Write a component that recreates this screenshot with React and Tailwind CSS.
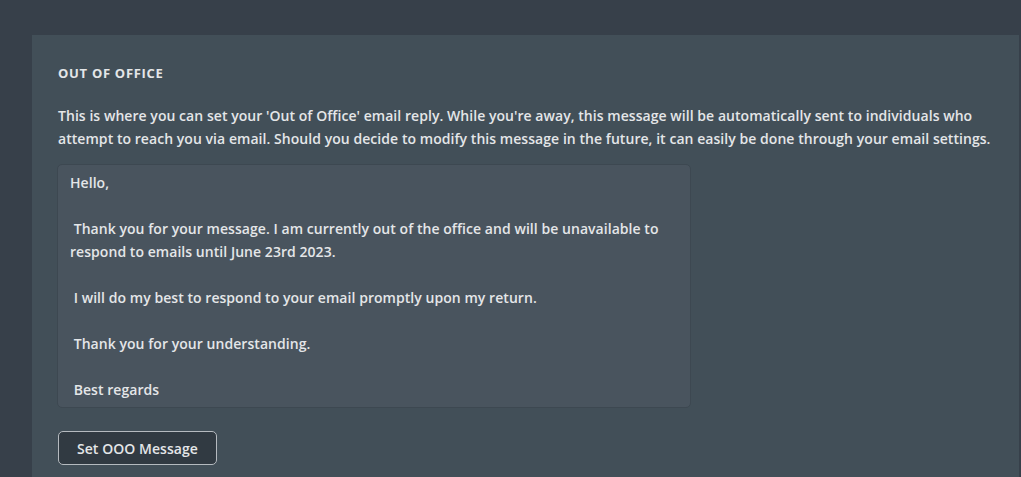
import React from 'react';

const MESSAGE = `Hello,

 Thank you for your message. I am currently out of the office and will be unavailable to respond to emails until June 23rd 2023.

 I will do my best to respond to your email promptly upon my return.

 Thank you for your understanding.

 Best regards`;

export default function App() {
  const [message, setMessage] = React.useState(MESSAGE);

  return (
    <div className="min-h-[477px] w-full bg-[#37404a] pt-[35px] pl-8 pr-[2px] font-['Open_Sans',_sans-serif] text-[#e4e6e8]">
      <section className="min-h-[442px] bg-[#424f58] pl-[26px] pr-3 pt-[30px] pb-3">
        {/* Heading */}
        <h2 className="text-[13px] font-bold uppercase leading-[16px] tracking-[0.7px]">Out of Office</h2>

        {/* Description */}
        <p className="mt-[23px] text-[14px] font-semibold leading-[23px] tracking-[0.05px]">
          This is where you can set your 'Out of Office' email reply. While you're away, this message will be automatically sent to individuals who attempt to reach you via email. Should you decide to modify this message in the future, it can easily be done through your email settings.
        </p>

        {/* Message box */}
        <textarea
          value={message}
          onChange={(e) => setMessage(e.target.value)}
          className="mt-[14px] -ml-px block h-[244px] w-[634px] resize-none rounded-[5px] border border-[#3d4851] bg-[#49545e] px-3 py-[6px] text-[14px] font-semibold leading-[23px] tracking-[0.05px] text-[#e4e6e8] outline-none"
        />

        {/* Action */}
        <button
          type="button"
          className="mt-[23px] h-[34px] rounded-[5px] border border-[#b5babf] bg-[#313a42] px-[18px] text-[14px] font-semibold tracking-[0.05px] text-[#e4e6e8]"
        >
          Set OOO Message
        </button>
      </section>
    </div>
  );
}
